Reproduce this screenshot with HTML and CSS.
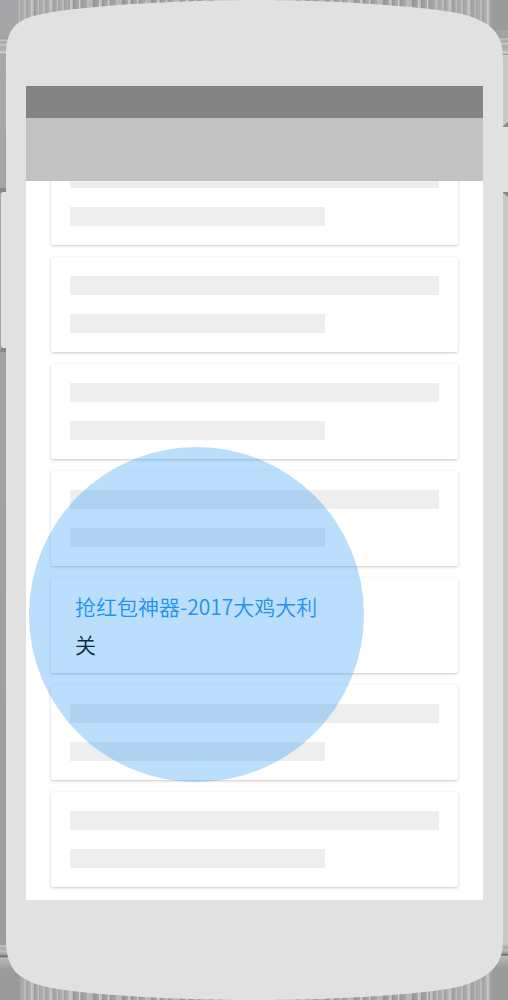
FILE: index.html
```html
<!DOCTYPE html>
<html lang="zh-CN">
<head>
<meta charset="utf-8">
<meta name="viewport" content="width=device-width, initial-scale=1">
<title>抢红包神器</title>
<link rel="stylesheet" href="styles.css">
</head>
<body>
<main class="device">
  <svg class="frame" viewBox="0 0 508 1000" preserveAspectRatio="none" aria-hidden="true">
    <defs>
      <linearGradient id="vs" gradientUnits="userSpaceOnUse" x1="0" x2="29" y1="0" y2="0" spreadMethod="repeat">
        <stop offset="0" stop-color="#bcbcbc"/><stop offset=".2" stop-color="#b4b4b4"/><stop offset=".22" stop-color="#929292"/><stop offset=".4" stop-color="#a6a6a6"/><stop offset=".42" stop-color="#cacaca"/><stop offset=".5" stop-color="#bababa"/><stop offset=".52" stop-color="#949494"/><stop offset=".72" stop-color="#acacac"/><stop offset=".74" stop-color="#cecece"/><stop offset=".8" stop-color="#9a9a9a"/><stop offset="1" stop-color="#aaa"/>
      </linearGradient>
      <linearGradient id="fs" gradientUnits="userSpaceOnUse" x1="0" x2="19" y1="0" y2="0" spreadMethod="repeat">
        <stop offset="0" stop-color="#c8c8c8"/><stop offset=".08" stop-color="#a6a6a6"/><stop offset=".25" stop-color="#aeaeae"/><stop offset=".32" stop-color="#c4c4c4"/><stop offset=".4" stop-color="#a0a0a0"/><stop offset=".58" stop-color="#b0b0b0"/><stop offset=".66" stop-color="#c6c6c6"/><stop offset=".75" stop-color="#b8b8b8"/><stop offset=".82" stop-color="#9c9c9c"/><stop offset="1" stop-color="#b0b0b0"/>
      </linearGradient>
      <linearGradient id="hs" x1="0" x2="0" y1="0" y2="1">
        <stop offset="0" stop-color="#a6a6a6"/><stop offset=".3" stop-color="#a0a0a0"/><stop offset=".36" stop-color="#c4c4c4"/><stop offset=".45" stop-color="#a4a4a4"/><stop offset=".55" stop-color="#c8c8c8"/><stop offset=".65" stop-color="#a8a8a8"/><stop offset=".8" stop-color="#b4b4b4"/><stop offset=".9" stop-color="#d0d0d0"/><stop offset="1" stop-color="#909090"/>
      </linearGradient>
      <linearGradient id="hb" x1="0" x2="0" y1="0" y2="1">
        <stop offset="0" stop-color="#c4c4c4"/><stop offset=".15" stop-color="#a8a8a8"/><stop offset=".25" stop-color="#bcbcbc"/><stop offset=".38" stop-color="#a0a0a0"/><stop offset=".45" stop-color="#666"/><stop offset=".52" stop-color="#b8b8b8"/><stop offset="1" stop-color="#9a9a9a"/>
      </linearGradient>
      <linearGradient id="side" x1="0" x2="0" y1="0" y2="1">
        <stop offset="0" stop-color="#a8a8aa"/><stop offset="1" stop-color="#9c9c9c"/>
      </linearGradient>
    </defs>
    <rect width="508" height="1000" fill="#9b9b9b"/>
    <rect x="0" y="55" width="8" height="890" fill="url(#side)"/>
    <rect x="502" y="55" width="6" height="890" fill="#c8c8c8"/>
    <rect x="0" y="0" width="18" height="32" fill="#a6a6a8"/>
    <rect x="18" y="0" width="50" height="24" fill="url(#fs)"/>
    <rect x="68" y="0" width="370" height="16" fill="url(#vs)"/>
    <rect x="438" y="0" width="54" height="30" fill="url(#fs)"/>
    <rect x="0" y="32" width="12" height="23" fill="url(#hs)"/>
    <rect x="496" y="30" width="12" height="25" fill="url(#hs)"/>
    <rect x="0" y="945" width="12" height="25" fill="url(#hb)"/>
    <rect x="496" y="944" width="12" height="24" fill="url(#hb)"/>
    <rect x="20" y="970" width="50" height="30" fill="url(#fs)"/>
    <rect x="70" y="984" width="360" height="16" fill="url(#vs)"/>
    <rect x="430" y="970" width="62" height="30" fill="url(#fs)"/>
    <path d="M0 188h6v7H2l-2-3zM0 352h6v-7H2z M508 122l-6 5h6zM508 197l-6-5h6z" fill="#888"/>
    <path d="M6 192H3Q1 192 1 196V344Q1 348 3 348H6z M502 127h6v65h-6z" fill="#e1e1e1"/>
    <path d="M6 55C6 30 16 18 43 14C85 5 190 0 254 0C340 0 430 7 462 14C492 22 503 34 503 58V940C503 962 494 976 462 986C430 994 340 1000 254 1000C190 1000 85 996 43 986C17 979 6 968 6 940z" fill="#e1e1e1"/>
  </svg>
  <section class="screen">
    <div class="statusbar"></div>
    <header class="toolbar"></header>
    <div class="list">
      <article class="card"><div class="bar"></div><div class="bar short"></div></article>
      <article class="card"><div class="bar"></div><div class="bar short"></div></article>
      <article class="card"><div class="bar"></div><div class="bar short"></div></article>
      <article class="card"><div class="bar"></div><div class="bar short"></div></article>
      <article class="card item"><h1 class="title">抢红包神器-2017大鸡大利</h1><p class="state">关</p></article>
      <article class="card"><div class="bar"></div><div class="bar short"></div></article>
      <article class="card"><div class="bar"></div><div class="bar short"></div></article>
      <div class="spotlight"></div>
    </div>
  </section>
</main>
</body>
</html>
```
FILE: styles.css
```css
* {
  box-sizing: border-box;
}

body {
  margin: 0;
  font-family: "Noto Sans CJK SC", sans-serif;
}

.device {
  position: relative;
  display: flex;
  min-height: 100vh;
  padding: 86px 25px 100px 26px;
}

.frame {
  position: absolute;
  inset: 0;
  width: 100%;
  height: 100%;
}

.screen {
  position: relative;
  flex: 1;
  display: flex;
  flex-direction: column;
  background: #fff;
}

.statusbar {
  height: 32px;
  background: #848484;
}

.toolbar {
  height: 63px;
  background: #c2c2c2;
}

.list {
  position: relative;
  flex: 1 1 0;
  display: flex;
  flex-direction: column;
  justify-content: flex-end;
  gap: 12px;
  padding: 0 25px 13px;
  overflow: hidden;
}

.card {
  flex: none;
  display: flex;
  flex-direction: column;
  gap: 19px;
  padding: 19px;
  border-radius: 2px;
  background: #fff;
  box-shadow: 0 1px 3px rgba(0, 0, 0, 0.22);
}

.bar {
  height: 19px;
  background: #eee;
}

.short {
  width: 69%;
}

.item {
  gap: 8px;
  height: 95px;
  padding: 13px 24px;
}

.title,
.state {
  position: relative;
  z-index: 2;
  margin: 0;
  font-size: 21px;
  font-weight: 350;
  line-height: 30px;
  white-space: nowrap;
}

.title {
  color: #2492ea;
}

.state {
  color: #0c2940;
}

.spotlight {
  position: absolute;
  left: 3px;
  bottom: 118px;
  z-index: 1;
  width: 335px;
  height: 335px;
  border-radius: 50%;
  background: rgba(33, 150, 243, 0.31);
}
```
